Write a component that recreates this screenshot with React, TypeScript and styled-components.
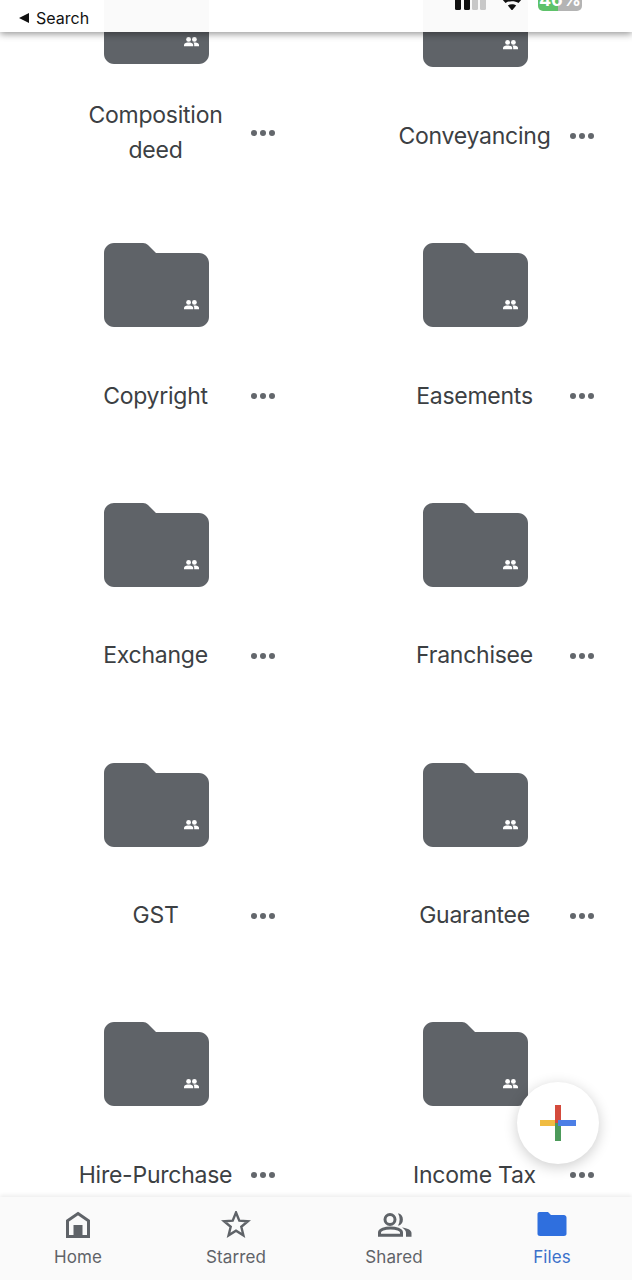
import styled, { createGlobalStyle } from 'styled-components';

const GlobalStyle = createGlobalStyle`
    html, body {
        margin: 0;
        padding: 0;
        background: #fff;
    }
    body {
        font-family: 'Inter', 'Liberation Sans', sans-serif;
    }
`;

const Screen = styled.div`
    position: relative;
    width: 632px;
    height: 1280px;
    overflow: hidden;
    background: #fff;
`;

const StatusBar = styled.div`
    position: absolute;
    top: 0;
    left: 0;
    right: 0;
    height: 32px;
    display: flex;
    align-items: flex-start;
    justify-content: space-between;
    background: rgba(255, 255, 255, 0.97);
    box-shadow: 0 2px 7px rgba(0, 0, 0, 0.42);
    z-index: 3;
`;

const BackLink = styled.div`
    display: flex;
    align-items: center;
    gap: 7px;
    margin: 9px 0 0 19px;
    font-size: 16px;
    line-height: 18px;
    color: #111;
`;

const BackArrow = styled.span`
    width: 0;
    height: 0;
    border-top: 5px solid transparent;
    border-bottom: 5px solid transparent;
    border-right: 10px solid #111;
`;

const Indicators = styled.div`
    display: flex;
    align-items: flex-start;
    height: 32px;
    overflow: hidden;
    margin-right: 50px;
    gap: 16px;
`;

// the top of the status bar is cut off by the screen edge in the capture
const Signal = styled.div`
    display: flex;
    align-items: flex-end;
    gap: 2.2px;
    height: 16px;
    margin-top: -6px;
`;

const SignalBar = styled.span<{ $h: number; $on: boolean }>`
    width: 6px;
    height: ${p => p.$h}px;
    border-radius: 1.5px;
    background: ${p => (p.$on ? '#111' : '#c8c8c8')};
`;

const WifiIcon = styled.svg`
    margin-top: -10px;
`;

const Battery = styled.div`
    width: 44px;
    height: 21px;
    margin-top: -10px;
    border-radius: 5px;
    background: linear-gradient(90deg, #5ec26a 45%, #b4b4b4 45%);
    color: #fff;
    font-size: 18px;
    font-weight: 700;
    line-height: 20px;
    text-align: center;
    white-space: nowrap;
    overflow: hidden;
`;

const Grid = styled.main`
    display: grid;
    grid-template-columns: 311px 311px;
    column-gap: 8px;
    grid-auto-rows: 259.8px;
    margin-top: -16.8px;
`;

const Cell = styled.div<{ $wrapped?: boolean }>`
    display: flex;
    flex-direction: column;
    align-items: center;
    margin-top: ${p => (p.$wrapped ? '-3px' : '0')};
`;

const FolderArt = styled.svg`
    display: block;
    margin-left: 2px;
`;

const LabelRow = styled.div`
    display: grid;
    grid-template-columns: 78px 155px 78px;
    align-items: center;
    height: 70px;
    margin-top: 34px;
`;

const Label = styled.div`
    grid-column: 2;
    font-size: 23px;
    line-height: 35px;
    letter-spacing: -0.25px;
    text-align: center;
    white-space: pre-line;
    color: #3c4043;
`;

const MoreDots = styled.div`
    display: flex;
    gap: 3px;
    margin-left: 18px;
    width: 24px;
`;

const Dot = styled.span`
    width: 6px;
    height: 6px;
    flex: none;
    border-radius: 50%;
    background: #63676c;
`;

const Fab = styled.div`
    position: absolute;
    left: 517px;
    top: 1082px;
    width: 82px;
    height: 82px;
    display: flex;
    align-items: center;
    justify-content: center;
    border-radius: 50%;
    background: #fff;
    box-shadow: 0 3px 14px rgba(0, 0, 0, 0.2);
    z-index: 2;
`;

const BottomNav = styled.nav`
    position: absolute;
    left: 0;
    right: 0;
    bottom: 0;
    height: 83px;
    display: grid;
    grid-template-columns: repeat(4, 158px);
    background: #fafafa;
    box-shadow: 0 -2px 4px rgba(0, 0, 0, 0.07);
    z-index: 2;
`;

const NavItem = styled.div<{ $active?: boolean }>`
    display: flex;
    flex-direction: column;
    align-items: center;
    padding: 14px 2px 0 0;
    font-size: 17px;
    line-height: 22px;
    letter-spacing: 0.1px;
    color: ${p => (p.$active ? '#3b71ca' : '#5f6368')};
`;

const NavIcon = styled.div`
    height: 32px;
    margin-bottom: 3px;
`;

function PeopleGlyph({ x, y }: { x: number; y: number }) {
    return (
        <g transform={`translate(${x} ${y})`} fill="#fff">
            <circle cx="4.6" cy="2.4" r="2.4" />
            <circle cx="10.4" cy="2.4" r="2.4" />
            <path d="M0 9.2V7.8C0 6.1 2.6 5.5 4.6 5.5S9.2 6.1 9.2 7.8V9.2Z" />
            <path d="M10.2 9.2V7.6C10.2 6.8 9.9 6.1 9.3 5.6 9.7 5.5 10.1 5.5 10.4 5.5 12.4 5.5 15 6.1 15 7.8V9.2Z" />
        </g>
    );
}

function SharedFolder() {
    return (
        <FolderArt width="105" height="84" viewBox="0 0 105 84">
            <path
                d="M10 0H39C41 0 42.6 .7 44 2L52 10H95C100.5 10 105 14.5 105 20V74C105 79.5 100.5 84 95 84H10C4.5 84 0 79.5 0 74V10C0 4.5 4.5 0 10 0Z"
                fill="#5f6368"
            />
            <PeopleGlyph x={80} y={57} />
        </FolderArt>
    );
}

function GooglePlus() {
    return (
        <svg width="36" height="36" viewBox="0 0 36 36">
            <rect x="0" y="15" width="18" height="6" fill="#f0bc42" />
            <rect x="15" y="18" width="6" height="18" fill="#4c9a5a" />
            <rect x="15" y="0" width="6" height="18" fill="#d44a3c" />
            <rect x="18" y="15" width="18" height="6" fill="#4c7fe6" />
        </svg>
    );
}

const files: { name: string; wrapped?: boolean }[] = [
    { name: 'Composition\ndeed', wrapped: true },
    { name: 'Conveyancing' },
    { name: 'Copyright' },
    { name: 'Easements' },
    { name: 'Exchange' },
    { name: 'Franchisee' },
    { name: 'GST' },
    { name: 'Guarantee' },
    { name: 'Hire-Purchase' },
    { name: 'Income Tax' }
];

export default function App() {
    return (
        <Screen>
            <GlobalStyle />
            <StatusBar>
                <BackLink>
                    <BackArrow />
                    Search
                </BackLink>
                <Indicators>
                    <Signal>
                        <SignalBar $h={13} $on />
                        <SignalBar $h={16} $on />
                        <SignalBar $h={16} $on={false} />
                        <SignalBar $h={16} $on={false} />
                    </Signal>
                    <WifiIcon width="20" height="20" viewBox="0 0 20 20">
                        <path d="M0 9H20L16.500 13C13 10.500 7 10.500 3.500 13Z" fill="#111" />
                        <path d="M10 20.500L5.800 15.500C8 13.800 12 13.800 14.200 15.500Z" fill="#111" />
                    </WifiIcon>
                    <Battery>46%</Battery>
                </Indicators>
            </StatusBar>

            <Grid>
                {files.map(file => (
                    <Cell key={file.name} $wrapped={file.wrapped}>
                        <SharedFolder />
                        <LabelRow>
                            <Label>{file.name}</Label>
                            <MoreDots>
                                <Dot />
                                <Dot />
                                <Dot />
                            </MoreDots>
                        </LabelRow>
                    </Cell>
                ))}
            </Grid>

            <Fab>
                <GooglePlus />
            </Fab>

            <BottomNav>
                <NavItem>
                    <NavIcon>
                        <svg width="24" height="30" viewBox="0 0 24 30">
                            <path
                                d="M12 2.500L22.500 9.800V25.500H1.500V9.800Z"
                                fill="none"
                                stroke="#5f6368"
                                strokeWidth="3"
                            />
                            <rect x="7.500" y="14" width="9" height="12" fill="#5f6368" />
                        </svg>
                    </NavIcon>
                    Home
                </NavItem>
                <NavItem>
                    <NavIcon>
                        <svg width="30" height="30" viewBox="0 2 30 30">
                            <path
                                d="M15 3.500L18.300 11.600 27 12.200 20.300 17.800 22.400 26.300 15 21.700 7.600 26.300 9.700 17.800 3 12.200 11.700 11.600Z"
                                fill="none"
                                stroke="#5f6368"
                                strokeWidth="2.400"
                            />
                        </svg>
                    </NavIcon>
                    Starred
                </NavItem>
                <NavItem>
                    <NavIcon>
                        <svg width="35" height="30" viewBox="0 1 35 30">
                            <circle cx="13" cy="9.500" r="5" fill="none" stroke="#5f6368" strokeWidth="3" />
                            <path
                                d="M2.500 25.200V22.500C2.500 19.500 8 18 13.500 18S24.500 19.500 24.500 22.500V25.200Z"
                                fill="none"
                                stroke="#5f6368"
                                strokeWidth="3"
                            />
                            <path d="M21 3.200A6.500 6.500 0 0 1 21 15.800C23.200 12 23.200 7 21 3.200Z" fill="#5f6368" />
                            <path d="M25 17.500C30 18 34.500 20 34.500 23V26.700H29V23C29 20.500 27.500 19 25 17.500Z" fill="#5f6368" />
                        </svg>
                    </NavIcon>
                    Shared
                </NavItem>
                <NavItem $active>
                    <NavIcon>
                        <svg width="30" height="30" viewBox="0 2 30 30">
                            <path
                                d="M2.500 3H11L14 6H27C28.100 6 29.500 7 29.500 8.500V25C29.500 26.200 28.300 27 27 27H3C1.700 27 .5 26 .5 25V5C.5 3.900 1.400 3 2.500 3Z"
                                fill="#2f6fde"
                            />
                        </svg>
                    </NavIcon>
                    Files
                </NavItem>
            </BottomNav>
        </Screen>
    );
}
